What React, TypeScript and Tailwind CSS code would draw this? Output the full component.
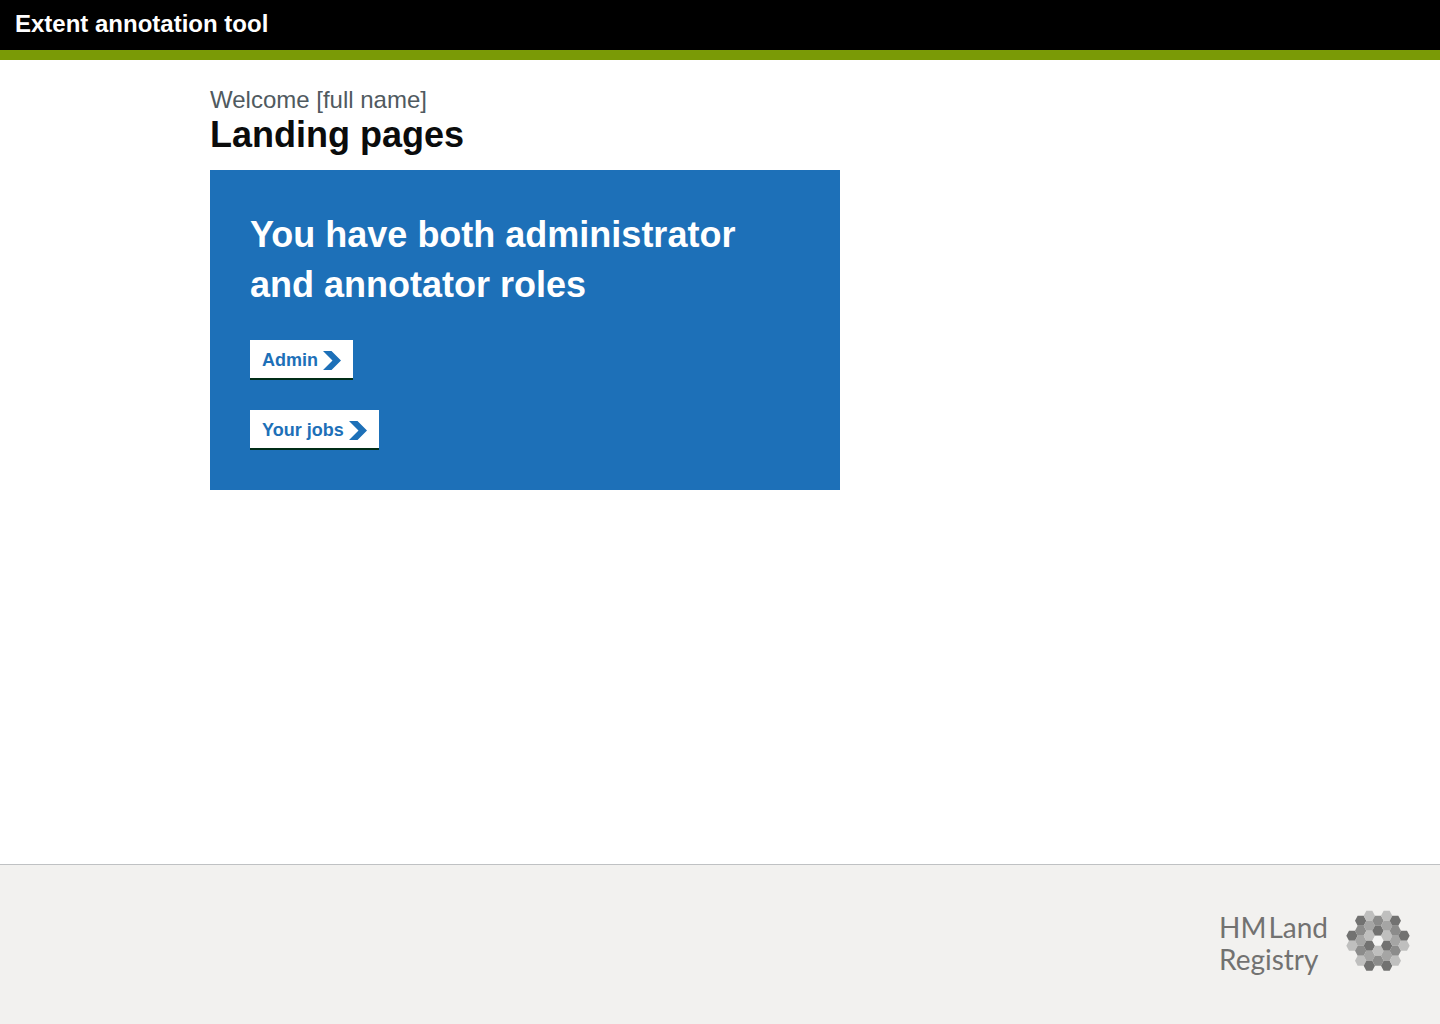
const LIGHT = '#bfbfbe';
const SOFT = '#a5a5a4';
const MID = '#8c8c8b';
const DARK = '#727271';
const CENTRE = '#f4f4f3';

const columns: { x: number; top: number; fills: string[] }[] = [
  { x: 18, top: 77, fills: [DARK, LIGHT] },
  { x: 44, top: 32, fills: [DARK, MID, SOFT, MID, LIGHT] },
  { x: 70, top: 17, fills: [LIGHT, SOFT, LIGHT, DARK, SOFT, DARK] },
  { x: 96, top: 32, fills: [MID, DARK, CENTRE, LIGHT, MID] },
  { x: 122, top: 17, fills: [LIGHT, SOFT, LIGHT, DARK, SOFT, DARK] },
  { x: 148, top: 32, fills: [DARK, MID, SOFT, MID, LIGHT] },
  { x: 174, top: 77, fills: [DARK, LIGHT] },
];

function HexMark() {
  return (
    <svg className="h-[62px] w-16" viewBox="0 0 192 186" aria-hidden="true">
      {columns.map(({ x, top, fills }) =>
        fills.map((fill, i) => {
          const y = top + i * 30;
          const points = [
            [x - 17, y], [x - 9, y - 15], [x + 9, y - 15],
            [x + 17, y], [x + 9, y + 15], [x - 9, y + 15],
          ].map((p) => p.join(',')).join(' ');
          return <polygon key={`${x}-${y}`} points={points} fill={fill} />;
        }),
      )}
    </svg>
  );
}

function StartButton({ label }: { label: string }) {
  return (
    <button
      type="button"
      className="flex h-10 cursor-pointer items-center gap-[5px] border-b-2 border-[#002d18] bg-white px-3 pt-0.5 text-lg font-bold text-[#1d70b8]"
    >
      {label}
      <svg className="h-[19px] w-[18px]" viewBox="0 0 18 19" fill="currentColor" aria-hidden="true">
        <path d="M0 0h8.5l9.5 9.5-9.5 9.5H0l9.5-9.5z" />
      </svg>
    </button>
  );
}

export default function App() {
  return (
    <div className="flex min-h-screen flex-col bg-white font-['Liberation_Sans',Arial,sans-serif] text-[#0b0c0c]">
      <header className="border-b-10 border-[#7a9a06] bg-black px-[15px] pt-2 pb-2.5">
        <p className="text-2xl font-bold text-white">Extent annotation tool</p>
      </header>

      <main className="mx-auto w-full max-w-[1020px] flex-1 pt-[25px]">
        <p className="text-2xl leading-[30px] text-[#505a5f]">Welcome [full name]</p>
        <h1 className="text-4xl font-bold">Landing pages</h1>
        <section className="mt-[15px] max-w-[630px] bg-[#1d70b8] p-10">
          <h2 className="max-w-[500px] text-4xl leading-[50px] font-bold text-white">
            You have both administrator and annotator roles
          </h2>
          <div className="mt-[30px] flex flex-col items-start gap-[30px]">
            <StartButton label="Admin" />
            <StartButton label="Your jobs" />
          </div>
        </section>
      </main>

      <footer className="flex h-40 items-start justify-end border-t border-[#bfc1c3] bg-[#f2f1ef] px-[30px] pt-[45px]">
        <div className="flex items-start gap-5" role="img" aria-label="HM Land Registry">
          <div className="w-[107px] pt-px font-['Lato',sans-serif] text-[28px] leading-8 whitespace-nowrap text-[#727271]">
            <p className="flex gap-0.5">
              <span>HM</span>
              <span>Land</span>
            </p>
            <p>Registry</p>
          </div>
          <HexMark />
        </div>
      </footer>
    </div>
  );
}
